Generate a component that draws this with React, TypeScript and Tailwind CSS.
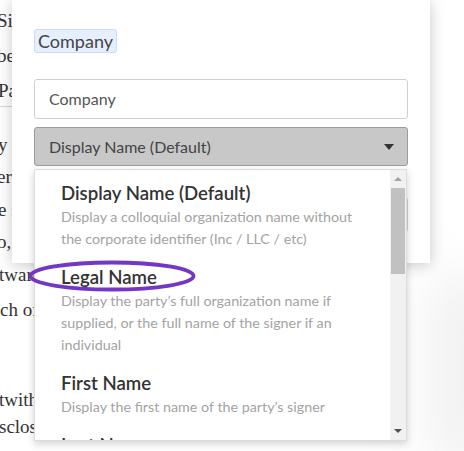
import React from 'react'

const serif = { fontFamily: '"Liberation Serif", "DejaVu Serif", serif' }
const sans = { fontFamily: 'Lato, "Open Sans", "Liberation Sans", sans-serif' }

type Option = { title: string; desc: string[] }

const options: Option[] = [
  {
    title: 'Display Name (Default)',
    desc: ['Display a colloquial organization name without', 'the corporate identifier (Inc / LLC / etc)'],
  },
  {
    title: 'Legal Name',
    desc: ['Display the party\u2019s full organization name if', 'supplied, or the full name of the signer if an', 'individual'],
  },
  { title: 'First Name', desc: ['Display the first name of the party\u2019s signer'] },
  { title: 'Last Name', desc: ['Display the last name of the party\u2019s signer'] },
]

// fragments of the document page peeking out from behind the modal
const topLines: [string, number][] = [
  ['Si', -3],
  ['be', -3],
  ['Pa', -2],
]
const lowerLines: [string, number, number][] = [
  ['y a', 32, -2],
  ['er', 33, -3],
  ['e s', 32, -2],
  ['o,', 33, -3],
  ['tware', 35, -1],
  ['ch of', 30, 0],
  ['', 60, 0],
  ['twithstanding', 27, -1],
  ['sclosed', 27, -1],
]

function BackgroundDoc() {
  return (
    <div className="w-full text-[19px] text-[#333]" style={serif}>
      <div className="h-[107px] w-[40px] overflow-hidden whitespace-nowrap border-b border-[#d6d6d6] pt-[3px] leading-[35px]">
        {topLines.map(([t, ml], i) => (
          <div key={i} style={{ marginLeft: ml }}>
            {t}
          </div>
        ))}
      </div>
      <div className="overflow-hidden whitespace-nowrap pt-[22px] leading-[32px]">
        {lowerLines.map(([t, h, ml], i) => (
          <div key={i} style={{ height: h, marginLeft: ml }}>
            {t}
          </div>
        ))}
      </div>
    </div>
  )
}

function OptionList() {
  return (
    <div className="absolute left-[22px] top-[169px] flex h-[272px] w-[373px] overflow-hidden border border-[#dcdcdc] bg-white shadow-[0_3px_8px_rgba(0,0,0,0.18)]">
      <div className="flex-1 overflow-hidden pl-[26px] pt-[10px]">
        {options.map((o, i) => (
          <div key={o.title} className={i === 0 ? '' : 'mt-[14px]'}>
            <div className="whitespace-nowrap text-[18.6px] font-semibold leading-[26px] text-[#333]">{o.title}</div>
            <div className="whitespace-nowrap text-[14.3px] leading-[22px] text-[#a3a3a3]">
              {o.desc.map((d) => (
                <div key={d}>{d}</div>
              ))}
            </div>
          </div>
        ))}
      </div>
      <div className="flex w-[16px] flex-col bg-[#f1f1f1]">
        <div className="flex h-[18px] items-center justify-center">
          <div className="h-0 w-0 border-x-[4px] border-b-[4px] border-x-transparent border-b-[#a3a3a3]" />
        </div>
        <div className="mx-[1px] h-[86px] bg-[#c1c1c1]" />
        <div className="flex-1" />
        <div className="flex h-[18px] items-center justify-center">
          <div className="h-0 w-0 border-x-[4px] border-t-[4px] border-x-transparent border-t-[#505050]" />
        </div>
      </div>
    </div>
  )
}

function Modal() {
  return (
    <div
      className="absolute left-[12px] top-0 h-[263px] w-[418px] bg-white px-[22px] pt-[29px] shadow-[0_2px_14px_rgba(0,0,0,0.22)]"
      style={sans}
    >
      <span className="inline-block h-[24px] rounded-[3px] border border-[#c9dbf7] bg-[#e6effd] px-[3px] text-[18px] leading-[22px] text-[#444]">
        Company
      </span>
      <div className="mt-[25px] flex h-[40px] items-center rounded-[3px] border border-[#cfcfcf] pl-[14px] text-[16px] text-[#555]">
        Company
      </div>
      <div className="mt-[8px] flex h-[39px] items-center justify-between rounded-[3px] border border-[#9c9c9c] bg-[#c8c8c8] pl-[14px] pr-[13px] text-[16px] text-[#444]">
        <span>Display Name (Default)</span>
        <div className="h-0 w-0 border-x-[5px] border-t-[6px] border-x-transparent border-t-[#333]" />
      </div>
      <div className="mt-[30px] flex justify-end">
        <div className="h-[37px] w-[120px] rounded-[4px] border border-[#cfcfcf] bg-white" />
      </div>
      <OptionList />
      <svg className="pointer-events-none absolute left-[16px] top-[259px]" width="170" height="34" viewBox="0 0 170 34">
        <ellipse cx="84" cy="17" rx="81.5" ry="13.5" fill="none" stroke="#7436c4" strokeWidth="3.8" />
      </svg>
    </div>
  )
}

export default function App() {
  return (
    <div className="relative h-[451px] w-[464px] overflow-hidden bg-white">
      <BackgroundDoc />
      <div className="absolute right-[-40px] top-[270px] h-[200px] w-[80px] rounded-full bg-[#f2f2f2] blur-xl" />
      <Modal />
    </div>
  )
}
